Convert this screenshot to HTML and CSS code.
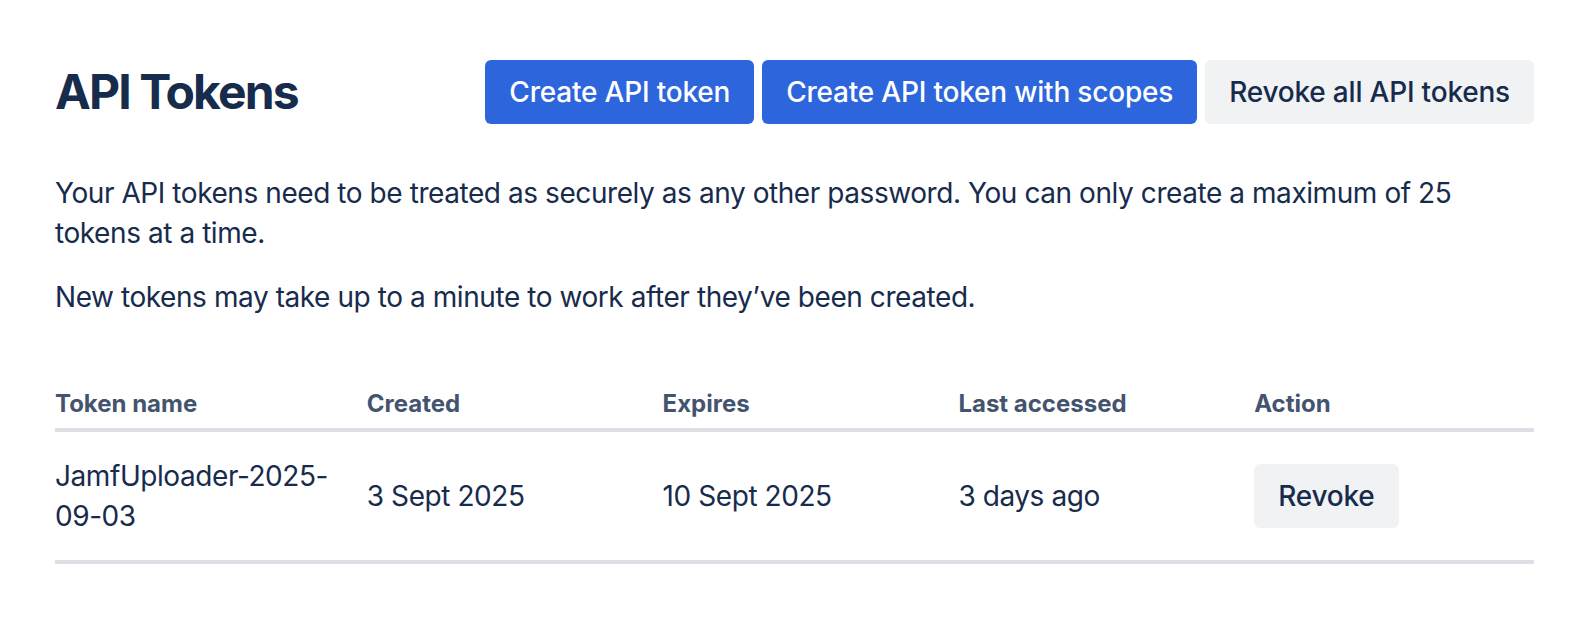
FILE: index.html
```html
<!DOCTYPE html>
<html lang="en">
<head>
<meta charset="utf-8">
<title>API Tokens</title>
<link rel="stylesheet" href="styles.css">
</head>
<body>
<main class="page">
  <header class="page-header">
    <h1 class="title">API Tokens</h1>
    <div class="actions">
      <button class="btn btn-primary">Create API token</button>
      <button class="btn btn-primary">Create API token with scopes</button>
      <button class="btn btn-subtle">Revoke all API tokens</button>
    </div>
  </header>
  <p class="text">Your API tokens need to be treated as securely as any other password. You can only create a maximum of 25 tokens at a time.</p>
  <p class="text">New tokens may take up to a minute to work after they’ve been created.</p>
  <table class="tokens">
    <thead>
      <tr>
        <th>Token name</th>
        <th>Created</th>
        <th>Expires</th>
        <th>Last accessed</th>
        <th>Action</th>
      </tr>
    </thead>
    <tbody>
      <tr>
        <td>JamfUploader-2025-09-03</td>
        <td>3 Sept 2025</td>
        <td>10 Sept 2025</td>
        <td>3 days ago</td>
        <td><button class="btn btn-subtle">Revoke</button></td>
      </tr>
    </tbody>
  </table>
</main>
</body>
</html>
```
FILE: styles.css
```css
* { box-sizing: border-box; }
html, body { margin: 0; padding: 0; background: #ffffff; }
body {
  font-family: Inter, "Noto Sans", sans-serif;
  color: #172B4D;
  font-size: 28px;
  line-height: 40px;
  letter-spacing: -0.43px;
}
.page {
  padding: 60px 56px 40px 55px;
}
.page-header {
  display: flex;
  align-items: center;
  justify-content: space-between;
}
.title {
  margin: 0;
  font-size: 48px;
  line-height: 56px;
  font-weight: 700;
  letter-spacing: -1.9px;
  color: #172B4D;
}
.actions {
  display: flex;
  gap: 8px;
}
.btn {
  font-family: inherit;
  font-size: 28px;
  font-weight: 500;
  letter-spacing: -0.2px;
  height: 64px;
  padding: 0 24px;
  border: none;
  border-radius: 6px;
  cursor: pointer;
}
.btn-primary {
  background: #2D66DC;
  color: #ffffff;
}
.btn-subtle {
  background: #F1F2F4;
  color: #172B4D;
}
.text {
  margin: 24px 0 0;
}
.page-header + .text {
  margin-top: 49px;
}
.tokens {
  width: 100%;
  margin-top: 63px;
  border-collapse: collapse;
  table-layout: fixed;
}
.tokens th {
  text-align: left;
  font-size: 24px;
  line-height: 32px;
  font-weight: 700;
  letter-spacing: 0;
  color: #44546F;
  padding: 8px 16px;
  border-bottom: 4px solid #DCDFE4;
}
.tokens td {
  padding: 24px 16px;
  vertical-align: middle;
  border-bottom: 4px solid #DCDFE4;
}
.tokens th:first-child,
.tokens td:first-child {
  padding-left: 0;
}
```
